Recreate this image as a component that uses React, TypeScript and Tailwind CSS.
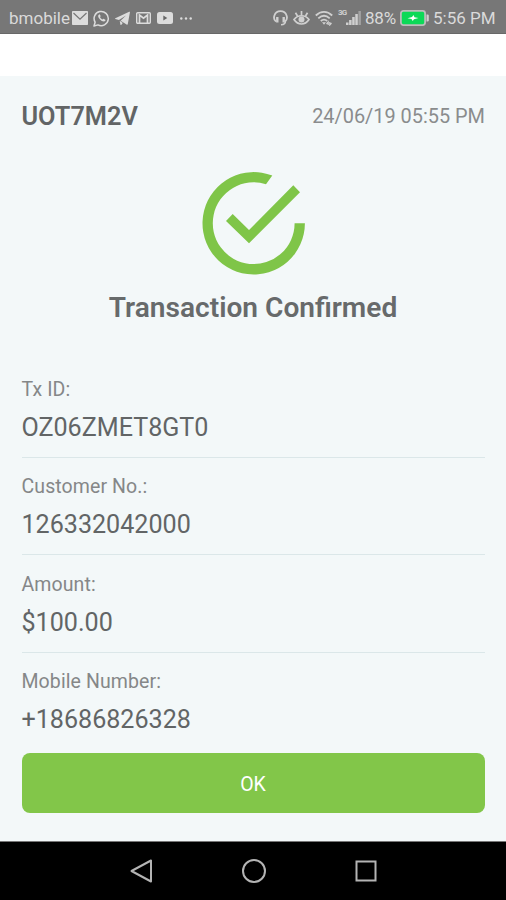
import type { ReactNode } from "react";

type Field = { label: string; value: string };

const fields: Field[] = [
  { label: "Tx ID:", value: "OZ06ZMET8GT0" },
  { label: "Customer No.:", value: "126332042000" },
  { label: "Amount:", value: "$100.00" },
  { label: "Mobile Number:", value: "+18686826328" },
];

function NotificationIcons() {
  return (
    <div className="flex items-center text-[#dcdcdc]">
      {/* Mail */}
      <svg className="mr-[5px] h-[14px] w-4" viewBox="0 0 16 14">
        <rect width="16" height="14" rx="0.8" fill="currentColor" />
        <path d="M1.5 2 8 8.2 14.5 2" fill="none" stroke="#777" strokeWidth="1.2" />
      </svg>
      {/* WhatsApp */}
      <svg className="mr-[5px] size-[17px]" viewBox="0 0 17 17">
        <path
          d="M1 16 2.1 12.2A7.1 7.1 0 1 1 5 14.9Z"
          fill="none"
          stroke="currentColor"
          strokeWidth="1.5"
          strokeLinejoin="round"
        />
        <path
          d="M6.1 4.4c-1.5.7-1.2 2.8.7 4.9 2 2.2 4.6 3 5.5 1.5.4-.7.2-1-.3-1.3l-1.2-.6c-.7-.3-.9.7-1.4.6-.9-.3-1.9-1.2-2.3-2.2-.1-.4.6-.6.5-1.2l-.6-1.3c-.1-.4-.5-.6-.9-.4Z"
          fill="currentColor"
        />
      </svg>
      {/* Telegram */}
      <svg className="mr-[6px] h-[15px] w-[15px]" viewBox="0 0 15 15">
        <path
          d="M.3 7.2 14.2.8c.5-.2.8 0 .7.6L12.800 13c-.1.7-.6.9-1.2.5L5.600 9.700 11 4.500 3.900 9 .3 7.900c-.4-.1-.4-.5 0-.7ZM4.700 9.800 7.800 12 6.400 13.700c-.5.6-.9.4-1-.2Z"
          fill="currentColor"
        />
      </svg>
      {/* Gmail */}
      <svg className="mr-[6px] h-3 w-[15px]" viewBox="0 0 15 12">
        <rect x="0.7" y="0.7" width="13.6" height="10.6" rx="1" fill="none" stroke="currentColor" strokeWidth="1.4" />
        <path d="M3.5 11V3l4 3.2 4-3.2v8" fill="none" stroke="currentColor" strokeWidth="1.7" />
      </svg>
      {/* YouTube */}
      <svg className="mr-[7px] h-3 w-4" viewBox="0 0 16 12">
        <rect width="16" height="12" rx="2.5" fill="currentColor" />
        <path d="M6.3 3.5v5l4-2.5Z" fill="#666" />
      </svg>
      <svg className="h-[3px] w-3" viewBox="0 0 12 3" fill="currentColor">
        <circle cx="1.3" cy="1.5" r="1.2" />
        <circle cx="6" cy="1.5" r="1.2" />
        <circle cx="10.7" cy="1.5" r="1.2" />
      </svg>
    </div>
  );
}

function SystemIcons() {
  return (
    <div className="flex items-center text-[#d0d0d0]">
      {/* Headset */}
      <svg className="mr-[5px] h-4 w-[15px]" viewBox="0 0 15 16" fill="none" stroke="currentColor">
        <path d="M3 11.5C-.5 9 .8 1.200 7.500 1.200s8 7.800 4.500 10.300" strokeWidth="1.8" />
        <path d="M4.300 7v5.500M10.700 7v5.500" strokeWidth="2.4" />
        <path d="M12.500 10.500c0 3-1.500 4.300-4.500 4.300" strokeWidth="1.6" />
      </svg>
      {/* Eye comfort */}
      <svg className="mr-[5px] h-4 w-[17px]" viewBox="0 0 17 16" fill="none" stroke="currentColor">
        <path d="M1 9.5c4-5 11-5 15 0-4 6-11 6-15 0Z" strokeWidth="1.7" />
        <circle cx="8.5" cy="9.5" r="3" fill="currentColor" stroke="none" />
        <path d="M8.5 5V1M4.500 6 2.500 2.800M12.500 6l2-3.200" strokeWidth="1.7" />
      </svg>
      {/* Wifi */}
      <svg className="mr-[5px] h-4 w-[18px]" viewBox="0 0 18 16" fill="none" stroke="currentColor">
        <path d="M.8 5.5c5-4.800 11.400-4.800 16.400 0M3.300 8.300c3.600-3.200 7.800-3.200 11.400 0M5.800 11c2-1.700 4.400-1.700 6.400 0" strokeWidth="1.8" />
        <path d="M7 12.300h4L9 14.800Z" fill="currentColor" stroke="none" />
        <path d="m11.500 14 1.700-2v3M14.800 12v3l1.700-2" strokeWidth="1.2" />
      </svg>
      <span className="mt-[-10px] w-[8px] text-[8px] leading-none font-bold tracking-[-0.8px]">3G</span>
      {/* Signal */}
      <svg className="mr-[4px] h-[14px] w-[15px]" viewBox="0 0 15 14" fill="currentColor">
        <path d="M0 11.5h2.500V14H0ZM3.100 9h2.500v5H3.100ZM6.200 6h2.500v8H6.200ZM9.300 3h2.500v11H9.300Z" />
        <path d="M12.400 0h2.500v14h-2.500Z" opacity="0.5" />
      </svg>
    </div>
  );
}

function StatusBar() {
  return (
    <div className="flex h-[34px] items-center border-b border-[#686868] bg-[#777] pt-[3px] pl-[9px] text-[17px] leading-none whitespace-nowrap text-[#dadada]">
      <span className="w-[63px]">bmobile</span>
      <NotificationIcons />
      <div className="ml-[81px] flex items-center">
        <SystemIcons />
        <span className="w-[35px] tracking-[-0.2px]">88%</span>
        {/* Battery, charging */}
        <svg className="mr-[4px] h-4 w-[29px]" viewBox="0 0 29 16">
          <rect x="0.9" y="0.9" width="24.2" height="14.2" rx="2.5" fill="#0cd957" stroke="#bcbcbc" strokeWidth="1.8" />
          <path d="M26.500 4.500h1q1.300 0 1.300 1.300v4.400q0 1.300-1.300 1.300h-1Z" fill="#d0d0d0" />
          <path d="M7.500 8.200 12 7l1.500-2 1 2.200 4 .8-4.500 1.200-1.300 1.900-1.200-2.200Z" fill="#fff" />
        </svg>
        <span>5:56 PM</span>
      </div>
    </div>
  );
}

function ConfirmedIcon() {
  return (
    <svg className="mx-auto block size-[103px]" viewBox="202 172 103 103" fill="#7fc548">
      <path d="M272.300 175.600A51.200 51.200 0 1 0 304.900 223.300H294.600A40.900 40.900 0 1 1 266 184.200Z" />
      <path d="m226 221 6.700-7L249 230l44.300-44.700 6.700 7-51 51Z" />
    </svg>
  );
}

function FieldRow({ label, value }: Field) {
  return (
    <div className="h-[97.5px] border-b-[1.5px] border-[#dbe7e9] pt-[17.5px] last:border-b-0">
      <p className="text-[19.5px] leading-6 tracking-[0.1px] text-[#858788]">{label}</p>
      <p className="mt-[10px] text-[25.1px] leading-8 text-[#626566]">{value}</p>
    </div>
  );
}

function NavIcon({ children }: { children: ReactNode }) {
  return (
    <svg className="size-[26px]" viewBox="0 0 26 26" fill="none" stroke="#b4b4b4" strokeWidth="2">
      {children}
    </svg>
  );
}

export default function App() {
  return (
    <div className="flex h-[900px] w-[506px] flex-col overflow-hidden bg-white font-[Roboto,sans-serif]">
      <StatusBar />
      <main className="mt-[42px] flex flex-1 flex-col bg-[#f3f8f9] px-[21px]">
        <header className="flex h-20 items-center justify-between pl-[0.5px]">
          <h1 className="pt-[2px] text-[25.3px] leading-8 font-semibold text-[#626566]">UOT7M2V</h1>
          <time className="pt-px text-[19.9px] leading-8 text-[#8a8c8d]">24/06/19 05:55 PM</time>
        </header>
        <div className="mt-4">
          <ConfirmedIcon />
          <h2 className="mt-[17px] text-center text-[28.1px] leading-8 font-semibold text-[#676a6b]">
            Transaction Confirmed
          </h2>
        </div>
        <section className="mx-[0.5px] mt-[36px] h-[393px]">
          {fields.map((field) => (
            <FieldRow key={field.label} {...field} />
          ))}
        </section>
        <button className="mx-[0.5px] h-[60px] shrink-0 rounded-[8px] bg-[#82c649] pt-[3px] text-[19.5px] text-white">
          OK
        </button>
      </main>
      <nav className="flex h-[59px] items-center justify-center gap-[86px] border-t border-[#777] bg-black pl-[2px]">
        <NavIcon>
          <path d="M22 2.500v21L2.500 13Z" strokeLinejoin="round" />
        </NavIcon>
        <NavIcon>
          <circle cx="13" cy="13" r="11" />
        </NavIcon>
        <NavIcon>
          <rect x="3.5" y="3.5" width="19" height="19" />
        </NavIcon>
      </nav>
    </div>
  );
}
